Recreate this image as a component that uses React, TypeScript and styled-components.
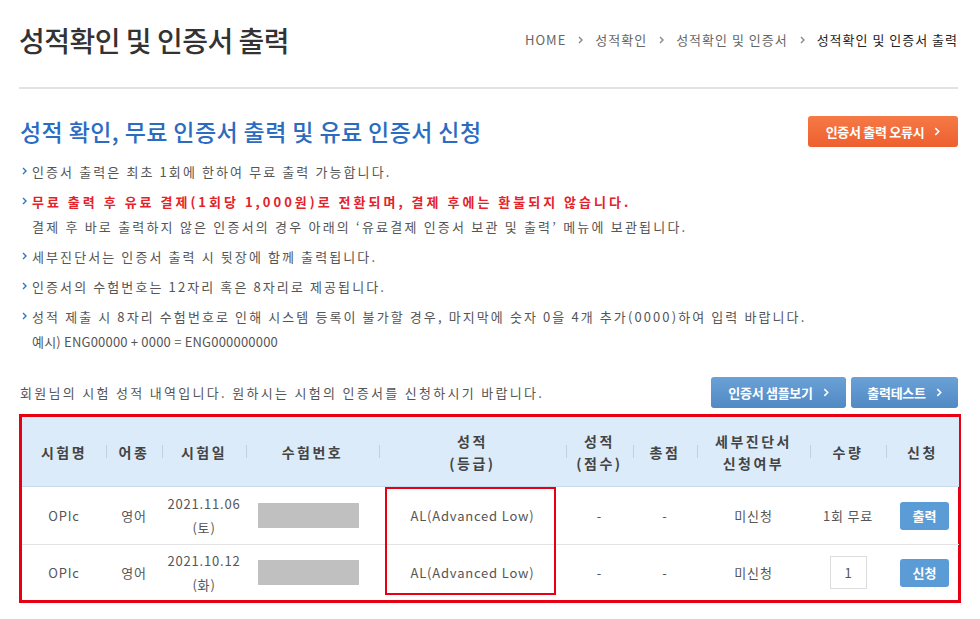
import styled, { createGlobalStyle } from "styled-components";

const GlobalStyle = createGlobalStyle`
  body {
    margin: 0;
    background: #fff;
    font-family: "Noto Sans CJK KR", "Noto Sans", sans-serif;
    color: #555;
  }
`;

const Page = styled.div`
  width: 939px;
  padding: 0 0 0 19px;
`;

const TopBar = styled.header`
  display: flex;
  justify-content: space-between;
  align-items: center;
  height: 89px;
  border-bottom: 2px solid #e2e2e2;
  box-sizing: border-box;
  padding-bottom: 8px;
`;

const PageTitle = styled.h1`
  margin: 0;
  font-size: 28px;
  font-weight: 500;
  color: #333;
  letter-spacing: -0.5px;
`;

const Crumbs = styled.nav`
  display: flex;
  align-items: center;
  gap: 12px;
  font-size: 13px;
  letter-spacing: 1px;
  color: #666;
`;

const Crumb = styled.span<{ $current?: boolean }>`
  color: ${(p) => (p.$current ? "#222" : "#666")};
`;

const Chevron = ({ color = "#888", w = 5, h = 8 }: { color?: string; w?: number; h?: number }) => (
  <svg width={w} height={h} viewBox="0 0 5 8" fill="none">
    <polyline points="1,1 4,4 1,7" stroke={color} strokeWidth="1.4" />
  </svg>
);

const SectionHead = styled.div`
  display: flex;
  justify-content: space-between;
  align-items: center;
  margin-top: 25px;
`;

const SectionTitle = styled.h2`
  margin: 0 0 0 1px;
  font-size: 23px;
  font-weight: 500;
  color: #2b6cc1;
  letter-spacing: 0.4px;
`;

const ActionButton = styled.button<{ $tone: "orange" | "blue" }>`
  display: inline-flex;
  align-items: center;
  justify-content: center;
  gap: 10px;
  height: 31px;
  padding: 0 14px;
  border: none;
  border-radius: 3px;
  font-family: inherit;
  font-size: 13px;
  font-weight: 700;
  color: #fff;
  letter-spacing: -0.3px;
  background: ${(p) =>
    p.$tone === "orange"
      ? "linear-gradient(#f57a45, #ee5f30)"
      : "linear-gradient(#6aa1d6, #5189c4)"};
`;

const Notes = styled.ul`
  list-style: none;
  margin: 11px 0 0 0;
  padding: 0;
`;

const Note = styled.li<{ $alert?: boolean }>`
  position: relative;
  padding-left: 13px;
  margin-bottom: 5px;
  font-size: 13px;
  line-height: 25px;
  letter-spacing: ${(p) => (p.$alert ? "3px" : "2.1px")};
  color: ${(p) => (p.$alert ? "#e4222a" : "#555")};
  font-weight: ${(p) => (p.$alert ? 700 : 400)};
`;

const Bullet = styled.span`
  position: absolute;
  left: 3px;
  top: 8px;
  display: flex;
`;

const Sub = styled.div<{ $tight?: boolean }>`
  color: #555;
  font-weight: 400;
  letter-spacing: ${(p) => (p.$tight ? "0.2px" : "2.2px")};
`;

const ListHead = styled.div`
  display: flex;
  justify-content: space-between;
  align-items: center;
  margin-top: 23px;
`;

const Caption = styled.p`
  margin: 0 0 0 1px;
  font-size: 13px;
  letter-spacing: 2.3px;
  color: #555;
`;

const ButtonRow = styled.div`
  display: flex;
  gap: 5px;
`;

const TableFrame = styled.div`
  position: relative;
  margin-top: 6px;
  margin-right: -3px;
  border: 3px solid #e60012;
`;

const Table = styled.table`
  width: 100%;
  border-collapse: collapse;
  table-layout: fixed;
`;

const Th = styled.th<{ $sep?: boolean }>`
  position: relative;
  height: 69px;
  padding: 0;
  background: #dcebf9;
  border-bottom: 1px solid #c9dcef;
  font-size: 14px;
  font-weight: 700;
  color: #444;
  letter-spacing: 2.5px;
  line-height: 22px;
  &::before {
    content: "";
    display: ${(p) => (p.$sep ? "block" : "none")};
    position: absolute;
    left: 0;
    top: 28px;
    width: 1px;
    height: 13px;
    background: #c3d1de;
  }
`;

const Td = styled.td`
  height: 57px;
  padding: 0;
  text-align: center;
  font-size: 13px;
  color: #555;
  line-height: 24px;
  letter-spacing: 0.8px;
  border-bottom: 1px solid #e3e3e3;
  tr:last-child > & {
    border-bottom: none;
    height: 55px;
  }
`;

const Masked = styled.div`
  width: 101px;
  height: 25px;
  margin-left: 12px;
  background: #c0c0c0;
`;

const QtyInput = styled.input`
  width: 37px;
  height: 33px;
  box-sizing: border-box;
  border: 1px solid #dcdcdc;
  text-align: center;
  font-family: inherit;
  font-size: 13px;
  color: #555;
  padding: 0;
`;

const RowButton = styled.button`
  width: 49px;
  height: 28px;
  border: none;
  border-radius: 3px;
  background: #5b9bd6;
  color: #fff;
  font-family: inherit;
  font-size: 13px;
  font-weight: 700;
  padding: 0;
  margin-left: 4px;
`;

const Highlight = styled.div`
  position: absolute;
  left: 363px;
  top: 70px;
  width: 171px;
  height: 108px;
  box-sizing: border-box;
  border: 2px solid #e60012;
  pointer-events: none;
`;

const columns: { label: React.ReactNode; width: number }[] = [
  { label: "시험명", width: 84 },
  { label: "어종", width: 56 },
  { label: "시험일", width: 84 },
  { label: "수험번호", width: 133 },
  { label: <>성적<br />(등급)</>, width: 187 },
  { label: <>성적<br />(점수)</>, width: 67 },
  { label: "총점", width: 64 },
  { label: <>세부진단서<br />신청여부</>, width: 113 },
  { label: "수량", width: 76 },
  { label: "신청", width: 73 },
];

const rows = [
  { date: "2021.11.06", day: "(토)", free: true, action: "출력" },
  { date: "2021.10.12", day: "(화)", free: false, action: "신청" },
];

export default function App() {
  return (
    <Page>
      <GlobalStyle />
      <TopBar>
        <PageTitle>성적확인 및 인증서 출력</PageTitle>
        <Crumbs>
          <Crumb>HOME</Crumb>
          <Chevron />
          <Crumb>성적확인</Crumb>
          <Chevron />
          <Crumb>성적확인 및 인증서</Crumb>
          <Chevron />
          <Crumb $current>성적확인 및 인증서 출력</Crumb>
        </Crumbs>
      </TopBar>

      <SectionHead>
        <SectionTitle>성적 확인, 무료 인증서 출력 및 유료 인증서 신청</SectionTitle>
        <ActionButton $tone="orange" style={{ width: 150 }}>
          인증서 출력 오류시 <Chevron color="#fff" w={6} h={9} />
        </ActionButton>
      </SectionHead>

      <Notes>
        <Note>
          <Bullet><Chevron color="#2f74c6" /></Bullet>
          인증서 출력은 최초 1회에 한하여 무료 출력 가능합니다.
        </Note>
        <Note $alert>
          <Bullet><Chevron color="#2f74c6" /></Bullet>
          무료 출력 후 유료 결제(1회당 1,000원)로 전환되며, 결제 후에는 환불되지 않습니다.
          <Sub>결제 후 바로 출력하지 않은 인증서의 경우 아래의 ‘유료결제 인증서 보관 및 출력’ 메뉴에 보관됩니다.</Sub>
        </Note>
        <Note>
          <Bullet><Chevron color="#2f74c6" /></Bullet>
          세부진단서는 인증서 출력 시 뒷장에 함께 출력됩니다.
        </Note>
        <Note>
          <Bullet><Chevron color="#2f74c6" /></Bullet>
          인증서의 수험번호는 12자리 혹은 8자리로 제공됩니다.
        </Note>
        <Note>
          <Bullet><Chevron color="#2f74c6" /></Bullet>
          성적 제출 시 8자리 수험번호로 인해 시스템 등록이 불가할 경우, 마지막에 숫자 0을 4개 추가(0000)하여 입력 바랍니다.
          <Sub $tight>예시) ENG00000 + 0000 = ENG000000000</Sub>
        </Note>
      </Notes>

      <ListHead>
        <Caption>회원님의 시험 성적 내역입니다. 원하시는 시험의 인증서를 신청하시기 바랍니다.</Caption>
        <ButtonRow>
          <ActionButton $tone="blue" style={{ width: 135 }}>
            인증서 샘플보기 <Chevron color="#fff" w={6} h={9} />
          </ActionButton>
          <ActionButton $tone="blue" style={{ width: 107 }}>
            출력테스트 <Chevron color="#fff" w={6} h={9} />
          </ActionButton>
        </ButtonRow>
      </ListHead>

      <TableFrame>
        <Table>
          <colgroup>
            {columns.map((c, i) => (
              <col key={i} style={{ width: c.width }} />
            ))}
          </colgroup>
          <thead>
            <tr>
              {columns.map((c, i) => (
                <Th key={i} $sep={i > 0}>{c.label}</Th>
              ))}
            </tr>
          </thead>
          <tbody>
            {rows.map((r) => (
              <tr key={r.date}>
                <Td>OPIc</Td>
                <Td>영어</Td>
                <Td>
                  {r.date}
                  <br />
                  {r.day}
                </Td>
                <Td><Masked /></Td>
                <Td>AL(Advanced Low)</Td>
                <Td>-</Td>
                <Td>-</Td>
                <Td>미신청</Td>
                <Td>{r.free ? "1회 무료" : <QtyInput defaultValue="1" />}</Td>
                <Td><RowButton>{r.action}</RowButton></Td>
              </tr>
            ))}
          </tbody>
        </Table>
        <Highlight />
      </TableFrame>
    </Page>
  );
}
